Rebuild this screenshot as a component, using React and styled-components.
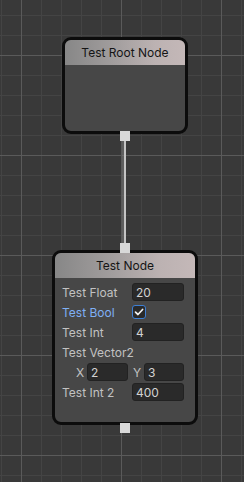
import React from "react";
import styled, { createGlobalStyle } from "styled-components";

const Global = createGlobalStyle`
  html, body { margin: 0; padding: 0; background: #393939; }
  body { font-family: Inter, "Noto Sans", sans-serif; }
`;

const Canvas = styled.div`
  width: 244px;
  height: 482px;
  overflow: hidden;
  box-sizing: border-box;
  padding: 37px 0 0 6px;
  display: flex;
  flex-direction: column;
  align-items: center;
  background-color: #393939;
  background-image:
    linear-gradient(to right, #5a5a5a 1px, transparent 1px),
    linear-gradient(to bottom, #5a5a5a 1px, transparent 1px),
    linear-gradient(to right, #444444 1px, transparent 1px),
    linear-gradient(to bottom, #444444 1px, transparent 1px);
  background-size: 100px 100px, 100px 100px, 20px 20px, 20px 20px;
  background-position: 21px 55px, 21px 55px, 1px 15px, 1px 15px;
`;

const Node = styled.div`
  width: ${(p) => p.$w}px;
  height: ${(p) => p.$h}px;
  box-sizing: border-box;
  border: 3px solid #0c0c0c;
  border-radius: 9px;
  background: #474747;
  display: flex;
  flex-direction: column;
  overflow: hidden;
  margin-top: ${(p) => p.$mt || 0}px;
`;

const Header = styled.div`
  height: 25px;
  flex: none;
  display: flex;
  align-items: center;
  justify-content: center;
  background: linear-gradient(to right, #878787 0%, #a19d9d 40%, #bcb2b2 75%, #c4b8b8 100%);
  color: #151515;
  font-size: 12px;
`;

const Body = styled.div`
  padding: 5px 11px 0 7px;
  display: flex;
  flex-direction: column;
  gap: 2px;
`;

const Row = styled.div`
  height: 18px;
  display: grid;
  grid-template-columns: 70px 52px;
  align-items: center;
`;

const Label = styled.span`
  font-size: 12px;
  color: ${(p) => (p.$active ? "#7fb0f5" : "#c2c2c2")};
  white-space: nowrap;
`;

const Field = styled.div`
  height: 18px;
  width: ${(p) => p.$w || 52}px;
  box-sizing: border-box;
  background: #2a2a2a;
  border: 1px solid #222222;
  border-radius: 3px;
  color: #d2d2d2;
  font-size: 12px;
  display: flex;
  align-items: center;
  padding-left: 3px;
`;

const Check = styled.div`
  width: 14px;
  height: 14px;
  box-sizing: border-box;
  border: 1px solid #3d7fd4;
  border-radius: 3px;
  background: #2a2a2a;
  display: flex;
  align-items: center;
  justify-content: center;
`;

const VecRow = styled.div`
  height: 18px;
  display: flex;
  align-items: center;
  padding-left: 14px;
`;

const AxisLabel = styled.span`
  font-size: 12px;
  color: #c2c2c2;
  width: 11px;
`;

const AxisGap = styled.div`
  width: 5px;
`;

const Port = styled.div`
  width: 10px;
  height: 10px;
  background: #d8d8d8;
  position: relative;
  z-index: 2;
  margin-top: ${(p) => p.$mt || 0}px;
  flex: none;
`;

const Wire = styled.div`
  width: 2px;
  height: 102px;
  background: #c4c4c4;
  box-shadow: -2px 0 0 rgba(120, 120, 120, 0.6);
  flex: none;
`;

export default function App() {
  return (
    <>
      <Global />
      <Canvas>
        <Node $w={126} $h={97}>
          <Header>Test Root Node</Header>
        </Node>
        <Port $mt={-3} />
        <Wire />
        <Port />
        <Node $w={146} $h={175} $mt={-3}>
          <Header>Test Node</Header>
          <Body>
            <Row>
              <Label>Test Float</Label>
              <Field>20</Field>
            </Row>
            <Row>
              <Label $active>Test Bool</Label>
              <Check>
                <svg width="10" height="10" viewBox="0 0 10 10">
                  <path d="M1.5 5.2 L4 7.5 L8.6 2.5" fill="none" stroke="#f0f0f0" strokeWidth="1.7" strokeLinecap="round" strokeLinejoin="round" />
                </svg>
              </Check>
            </Row>
            <Row>
              <Label>Test Int</Label>
              <Field>4</Field>
            </Row>
            <Row>
              <Label>Test Vector2</Label>
            </Row>
            <VecRow>
              <AxisLabel>X</AxisLabel>
              <Field $w={41}>2</Field>
              <AxisGap />
              <AxisLabel>Y</AxisLabel>
              <Field $w={40}>3</Field>
            </VecRow>
            <Row>
              <Label>Test Int 2</Label>
              <Field>400</Field>
            </Row>
          </Body>
        </Node>
        <Port $mt={-2} />
      </Canvas>
    </>
  );
}
